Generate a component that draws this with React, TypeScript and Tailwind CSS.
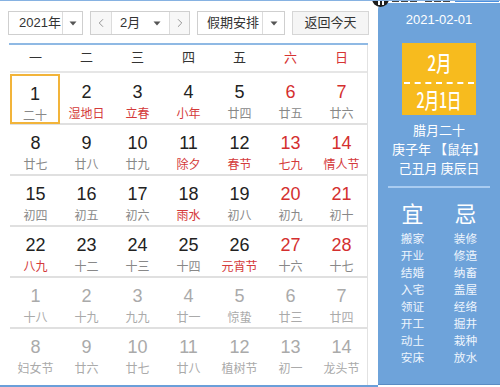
import React from "react";
import { ChevronLeft, ChevronRight } from "lucide-react";

type Day = {
  n: number;
  lunar: string;
  redNum?: boolean;
  redLunar?: boolean;
  other?: boolean;
  selected?: boolean;
};

const weeks: Day[][] = [
  [
    { n: 1, lunar: "二十", selected: true },
    { n: 2, lunar: "湿地日", redLunar: true },
    { n: 3, lunar: "立春", redLunar: true },
    { n: 4, lunar: "小年", redLunar: true },
    { n: 5, lunar: "廿四" },
    { n: 6, lunar: "廿五", redNum: true },
    { n: 7, lunar: "廿六", redNum: true },
  ],
  [
    { n: 8, lunar: "廿七" },
    { n: 9, lunar: "廿八" },
    { n: 10, lunar: "廿九" },
    { n: 11, lunar: "除夕", redLunar: true },
    { n: 12, lunar: "春节", redLunar: true },
    { n: 13, lunar: "七九", redNum: true, redLunar: true },
    { n: 14, lunar: "情人节", redNum: true, redLunar: true },
  ],
  [
    { n: 15, lunar: "初四" },
    { n: 16, lunar: "初五" },
    { n: 17, lunar: "初六" },
    { n: 18, lunar: "雨水", redLunar: true },
    { n: 19, lunar: "初八" },
    { n: 20, lunar: "初九", redNum: true },
    { n: 21, lunar: "初十", redNum: true },
  ],
  [
    { n: 22, lunar: "八九", redLunar: true },
    { n: 23, lunar: "十二" },
    { n: 24, lunar: "十三" },
    { n: 25, lunar: "十四" },
    { n: 26, lunar: "元宵节", redLunar: true },
    { n: 27, lunar: "十六", redNum: true },
    { n: 28, lunar: "十七", redNum: true },
  ],
  [
    { n: 1, lunar: "十八", other: true },
    { n: 2, lunar: "十九", other: true },
    { n: 3, lunar: "九九", other: true },
    { n: 4, lunar: "廿一", other: true },
    { n: 5, lunar: "惊蛰", other: true },
    { n: 6, lunar: "廿三", other: true },
    { n: 7, lunar: "廿四", other: true },
  ],
  [
    { n: 8, lunar: "妇女节", other: true },
    { n: 9, lunar: "廿六", other: true },
    { n: 10, lunar: "廿七", other: true },
    { n: 11, lunar: "廿八", other: true },
    { n: 12, lunar: "植树节", other: true },
    { n: 13, lunar: "初一", other: true },
    { n: 14, lunar: "龙头节", other: true },
  ],
];

const weekdays = ["一", "二", "三", "四", "五", "六", "日"];
const yi = ["搬家", "开业", "结婚", "入宅", "领证", "开工", "动土", "安床"];
const ji = ["装修", "修造", "纳畜", "盖屋", "经络", "掘井", "栽种", "放水"];

const Caret = () => (
  <svg width="8" height="5" viewBox="0 0 8 5">
    <path d="M0.5 0.5 L7.5 0.5 L4 4.5 Z" fill="#555" />
  </svg>
);

const App = () => {
  return (
    <div className="relative w-[500px] h-[387px] overflow-hidden bg-white border-t border-[#86b2e2] font-['Liberation_Sans','Noto_Sans_CJK_SC',sans-serif]">
      <div className="flex h-full">
        {/* calendar */}
        <div className="w-[378px] flex flex-col border-b-2 border-[#6b9fd9]">
          <div className="mt-[10px] pl-[8px] flex gap-[7px] h-[24px] text-[13px] text-[#333]">
            <div className="w-[75px] flex border border-[#cfcfcf]">
              <div className="flex-1 flex items-center pl-[10px]">2021年</div>
              <div className="w-[20px] border-l border-[#dcdcdc] flex items-center justify-center">
                <Caret />
              </div>
            </div>
            <div className="w-[100px] flex border border-[#cfcfcf]">
              <div className="w-[21px] bg-[#f7f7f7] border-r border-[#dcdcdc] flex items-center justify-center">
                <ChevronLeft size={14} strokeWidth={1.3} color="#777" />
              </div>
              <div className="flex-1 flex items-center pl-[8px]">2月</div>
              <div className="w-[16px] flex items-center">
                <Caret />
              </div>
              <div className="w-[20px] bg-[#f7f7f7] border-l border-[#dcdcdc] flex items-center justify-center">
                <ChevronRight size={14} strokeWidth={1.3} color="#777" />
              </div>
            </div>
            <div className="w-[88px] flex border border-[#cfcfcf]">
              <div className="flex-1 flex items-center pl-[9px]">假期安排</div>
              <div className="w-[22px] border-l border-[#dcdcdc] flex items-center justify-center">
                <Caret />
              </div>
            </div>
            <div className="w-[77px] flex items-center justify-center border border-[#d6d6d6] bg-[#f5f5f5]">
              返回今天
            </div>
          </div>

          <div className="mt-[8px] ml-[9px] w-[359px] h-[2px] bg-[#8fb9e4]" />

          <div className="ml-[8px] w-[360px] flex-1 pl-[2px] border-r border-[#e2e2e2]">
            <div className="grid grid-cols-[repeat(7,51px)] h-[28px] items-center border-b-2 border-[#e6e6e6] text-[13px]">
              {weekdays.map((w, i) => (
                <div key={w} className={`text-center ${i >= 5 ? "text-[#d63333]" : "text-[#333]"}`}>
                  {w}
                </div>
              ))}
            </div>
            {weeks.map((week, wi) => (
              <div
                key={wi}
                className={`grid grid-cols-[repeat(7,51px)] h-[51px] ${wi < 5 ? "border-b-2 border-[#e0e0e0]" : ""} ${wi === 0 ? "mt-[1px]" : ""}`}
              >
                {week.map((d, di) => (
                  <div
                    key={di}
                    className={`flex flex-col items-center pt-[8px] ${d.selected ? "w-[50px] border-2 border-[#f2b43a] pt-[6px]" : ""}`}
                  >
                    <div
                      className={`text-[18px] leading-[20px] ${d.other ? "text-[#aaa]" : d.redNum ? "text-[#d42f2f]" : "text-[#222]"}`}
                    >
                      {d.n}
                    </div>
                    <div
                      className={`mt-[3px] text-[12px] leading-[15px] font-['Noto_Sans_CJK_SC',sans-serif] ${d.other ? "text-[#aaa]" : d.redLunar ? "text-[#d43a3a]" : "text-[#888]"}`}
                    >
                      {d.lunar}
                    </div>
                  </div>
                ))}
              </div>
            ))}
          </div>
        </div>

        {/* side panel */}
        <div className="mt-[2px] w-[122px] h-[382px] rounded-tl-[6px] bg-[#6ea3da] border-b border-[#5a8cc4] flex flex-col items-center text-white font-['Noto_Sans_CJK_SC',sans-serif]">
          <div className="mt-[9px] text-[13px] leading-[16px] font-['Liberation_Sans',sans-serif]">2021-02-01</div>
          <div className="mt-[15px] w-[74px] h-[72px] bg-[#f7bb1e] flex flex-col items-center">
            <div className="h-[43px] flex items-center text-[21px] font-medium scale-x-[0.72]">2月</div>
            <div className="w-[70px] border-t-2 border-dashed border-white" />
            <div className="flex-1 flex items-center text-[21px] font-medium scale-x-[0.68] whitespace-nowrap">2月1日</div>
          </div>
          <div className="mt-[5px] text-[13px] leading-[19px] text-center">
            <div>腊月二十</div>
            <div>庚子年 【鼠年】</div>
            <div>己丑月 庚辰日</div>
          </div>
          <div className="mt-[9px] w-[102px] h-[2px] bg-[#a9ccf1]" />
          <div className="mt-[8px] flex gap-[28px]">
            {[
              { t: "宜", items: yi },
              { t: "忌", items: ji },
            ].map((c) => (
              <div key={c.t} className="w-[25px] flex flex-col items-center">
                <div className="text-[22px] leading-[32px] mb-[1px]">{c.t}</div>
                {c.items.map((it) => (
                  <div key={it} className="h-[17px] text-[11.7px] leading-[17px] whitespace-nowrap text-[#eef5fd]">
                    {it}
                  </div>
                ))}
              </div>
            ))}
          </div>
        </div>
      </div>

      {/* clipped toolbar above the panel */}
      <div className="absolute z-10 left-[372px] top-[-11px] flex items-end gap-[3px]">
        <div className="w-[17px] h-[17px] rounded-full bg-[#1d1d1d] flex items-end justify-center pb-[2px] gap-[2px]">
          <span className="w-[2px] h-[4px] bg-white" />
          <span className="w-[2px] h-[4px] bg-white" />
        </div>
        <div className="flex gap-[2px] pb-[5px]">
          {[0, 1, 2, 3, 4, 5].map((i) => (
            <span key={i} className={`w-[7px] h-[3px] bg-[#444] ${i === 2 ? "mr-[6px]" : ""}`} />
          ))}
        </div>
        <div className="w-[44px] h-[3px] mb-[5px] ml-[2px] border-b border-[#4a8fe0] bg-[#bcd6f3]" />
      </div>
    </div>
  );
};

export default App;
